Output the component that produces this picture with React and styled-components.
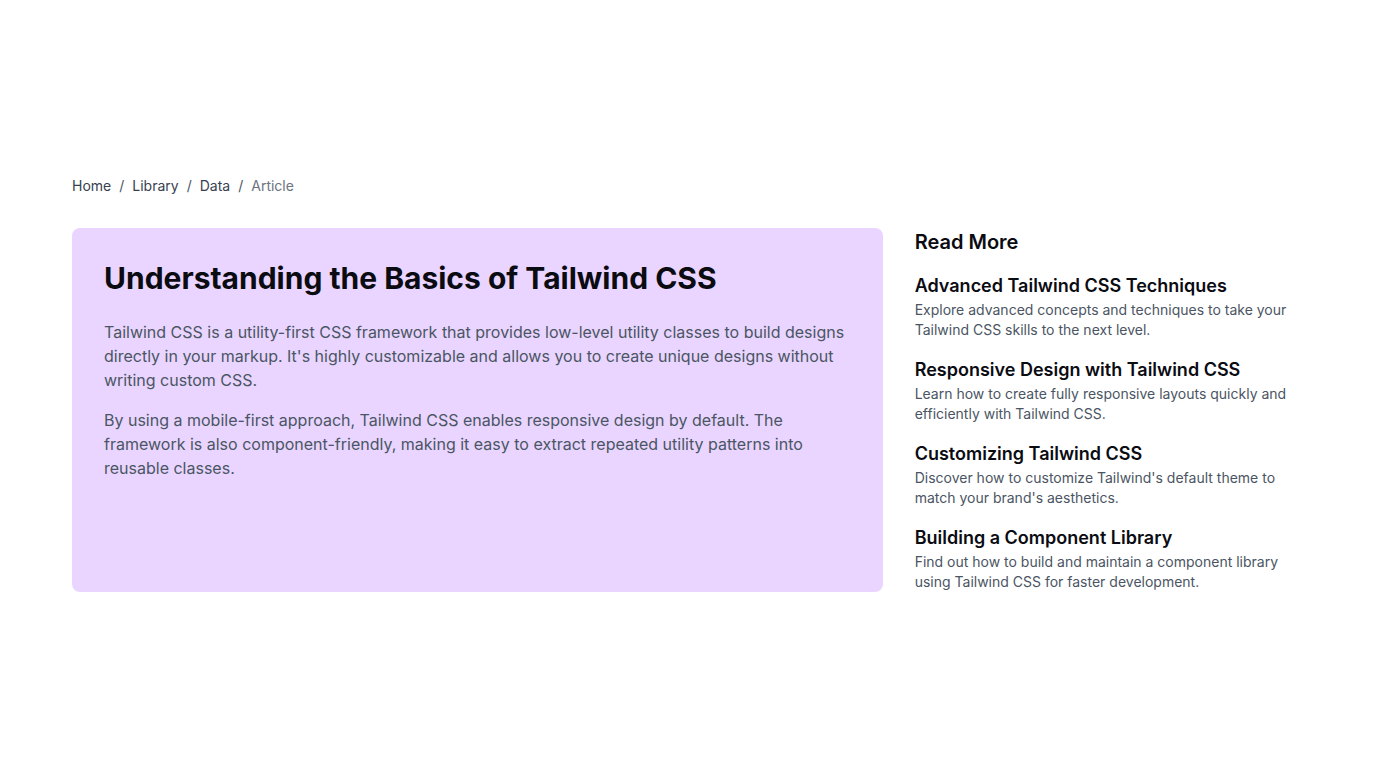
import React from "react";
import styled, { createGlobalStyle } from "styled-components";

const GlobalStyle = createGlobalStyle`
  * { box-sizing: border-box; }
  body {
    margin: 0;
    font-family: Inter, "Noto Sans", sans-serif;
    background: #ffffff;
    color: #111827;
  }
  h1, h2, h3, p, ol { margin: 0; padding: 0; }
`;

const crumbs = ["Home", "Library", "Data"];

const related = [
  {
    title: "Advanced Tailwind CSS Techniques",
    text: "Explore advanced concepts and techniques to take your Tailwind CSS skills to the next level.",
  },
  {
    title: "Responsive Design with Tailwind CSS",
    text: "Learn how to create fully responsive layouts quickly and efficiently with Tailwind CSS.",
  },
  {
    title: "Customizing Tailwind CSS",
    text: "Discover how to customize Tailwind's default theme to match your brand's aesthetics.",
  },
  {
    title: "Building a Component Library",
    text: "Find out how to build and maintain a component library using Tailwind CSS for faster development.",
  },
];

export default function App() {
  return (
    <>
      <GlobalStyle />
      <Page>
        <Container>
          <Breadcrumb>
            {crumbs.map((c) => (
              <React.Fragment key={c}>
                <Crumb>{c}</Crumb>
                <Sep>/</Sep>
              </React.Fragment>
            ))}
            <Crumb current>Article</Crumb>
          </Breadcrumb>
          <Grid>
            <Article>
              <Title>Understanding the Basics of Tailwind CSS</Title>
              <Body>
                Tailwind CSS is a utility-first CSS framework that provides
                low-level utility classes to build designs directly in your
                markup. It's highly customizable and allows you to create unique
                designs without writing custom CSS.
              </Body>
              <Body>
                By using a mobile-first approach, Tailwind CSS enables responsive
                design by default. The framework is also component-friendly,
                making it easy to extract repeated utility patterns into reusable
                classes.
              </Body>
            </Article>
            <Aside>
              <AsideHeading>Read More</AsideHeading>
              <List>
                {related.map((r) => (
                  <Item key={r.title}>
                    <ItemTitle>{r.title}</ItemTitle>
                    <ItemText>{r.text}</ItemText>
                  </Item>
                ))}
              </List>
            </Aside>
          </Grid>
        </Container>
      </Page>
    </>
  );
}

const Page = styled.div`
  min-height: 100vh;
  display: flex;
  align-items: center;
`;

const Container = styled.div`
  width: 100%;
  max-width: 1280px;
  margin: 0 auto;
  padding: 0 24px;
`;

const Breadcrumb = styled.nav`
  display: flex;
  align-items: center;
  font-size: 14px;
  line-height: 20px;
  margin-bottom: 32px;
`;

const Crumb = styled.span`
  color: ${(p) => (p.current ? "#6b7280" : "#374151")};
`;

const Sep = styled.span`
  color: #4b5563;
  margin: 0 8px;
`;

const Grid = styled.div`
  display: grid;
  grid-template-columns: repeat(3, minmax(0, 1fr));
  gap: 32px;
`;

const Article = styled.article`
  grid-column: span 2;
  background: #e9d5ff;
  border-radius: 8px;
  padding: 32px;
`;

const Title = styled.h1`
  font-size: 30px;
  line-height: 36px;
  font-weight: 700;
  color: #0b0b12;
  margin-bottom: 24px;
`;

const Body = styled.p`
  font-size: 16px;
  line-height: 24px;
  color: #4b5563;
  & + & {
    margin-top: 16px;
  }
`;

const Aside = styled.aside`
  display: flex;
  flex-direction: column;
`;

const AsideHeading = styled.h2`
  font-size: 20px;
  line-height: 28px;
  font-weight: 600;
  color: #0b0b12;
  margin-bottom: 16px;
`;

const List = styled.div`
  display: flex;
  flex-direction: column;
  gap: 16px;
`;

const Item = styled.div``;

const ItemTitle = styled.h3`
  font-size: 18px;
  line-height: 28px;
  font-weight: 600;
  color: #0b0b12;
`;

const ItemText = styled.p`
  font-size: 14px;
  line-height: 20px;
  color: #4b5563;
`;
